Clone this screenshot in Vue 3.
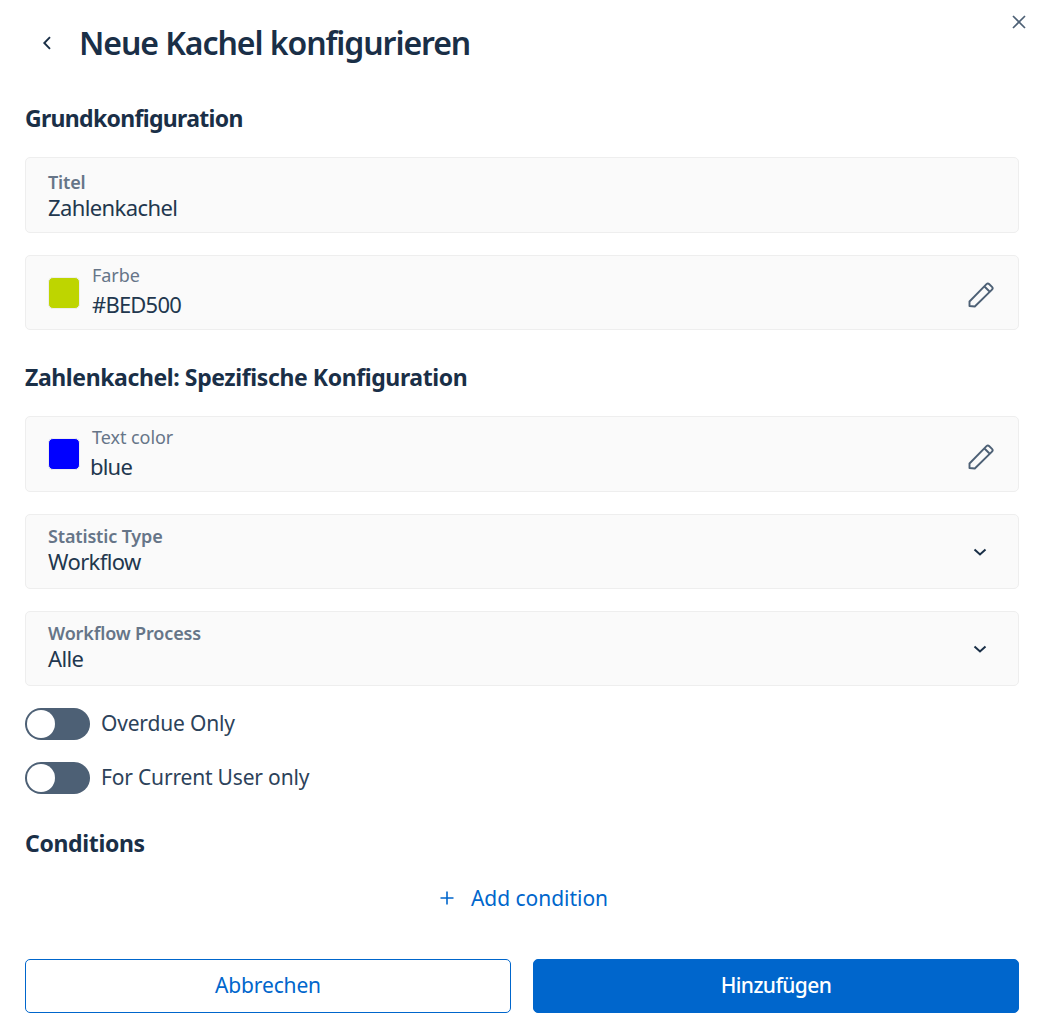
<template>
  <div class="dialog">
    <button class="close" aria-label="Schließen">
      <svg width="16" height="16" viewBox="0 0 16 16"><path d="M2 2l12 12M14 2L2 14" /></svg>
    </button>

    <header class="header">
      <svg class="back" width="12" height="14" viewBox="0 0 12 14"><path d="M9 1.2L3.3 7l5.7 5.8" /></svg>
      <h1>Neue Kachel konfigurieren</h1>
    </header>

    <h2 class="section section--first">Grundkonfiguration</h2>
    <div class="field field--title">
      <label>Titel</label>
      <div class="value">Zahlenkachel</div>
    </div>
    <div class="field field--color field--short">
      <span class="swatch" style="background: #bed500"></span>
      <div class="color-text">
        <span class="color-label">Farbe</span>
        <span class="color-value">#BED500</span>
      </div>
      <svg class="pencil" width="30" height="30" viewBox="0 0 30 30"><path d="M3.5 27v-4.5L20.5 5.2a2 2 0 0 1 2.8 0l2.7 2.7a2 2 0 0 1 0 2.8L8.8 27.5zM18.5 7.5l5.5 5.5" /></svg>
    </div>

    <h2 class="section">Zahlenkachel: Spezifische Konfiguration</h2>
    <div class="field field--color">
      <span class="swatch" style="background: #0000ff"></span>
      <div class="color-text">
        <span class="color-label">Text color</span>
        <span class="color-value color-value--name">blue</span>
      </div>
      <svg class="pencil" width="30" height="30" viewBox="0 0 30 30"><path d="M3.5 27v-4.5L20.5 5.2a2 2 0 0 1 2.8 0l2.7 2.7a2 2 0 0 1 0 2.8L8.8 27.5zM18.5 7.5l5.5 5.5" /></svg>
    </div>
    <div v-for="item in selects" :key="item.label" class="field field--select field--short">
      <div class="select-text">
        <label>{{ item.label }}</label>
        <div class="value">{{ item.value }}</div>
      </div>
      <svg class="chevron" width="16" height="10" viewBox="0 0 16 10"><path d="M2.5 2.5L8 7.5l5.5-5" /></svg>
    </div>

    <div v-for="toggle in toggles" :key="toggle" class="toggle-row">
      <span class="toggle"><span class="knob"></span></span>
      <span class="toggle-label">{{ toggle }}</span>
    </div>

    <h2 class="section section--conditions">Conditions</h2>
    <button class="add">
      <svg width="16" height="16" viewBox="0 0 16 16"><path d="M8 1.5v13M1.5 8h13" /></svg>
      <span>Add condition</span>
    </button>

    <footer class="actions">
      <button class="btn btn--outline">Abbrechen</button>
      <button class="btn btn--primary">Hinzufügen</button>
    </footer>
  </div>
</template>

<script setup>
const selects = [
  { label: "Statistic Type", value: "Workflow" },
  { label: "Workflow Process", value: "Alle" },
];
const toggles = ["Overdue Only", "For Current User only"];
</script>

<style>
html,
body {
  margin: 0;
  background: #fff;
}
</style>

<style scoped>
.dialog {
  position: relative;
  box-sizing: border-box;
  width: 1041px;
  height: 1027px;
  padding: 0 22px 0 25px;
  font-family: "Noto Sans", "Open Sans", sans-serif;
  color: #1a2f47;
}

.close {
  position: absolute;
  top: 14px;
  right: 14px;
  width: 16px;
  height: 16px;
  padding: 0;
  border: none;
  background: none;
}

.close svg {
  display: block;
  fill: none;
  stroke: #4d6075;
  stroke-width: 1.7;
}

.header {
  display: flex;
  align-items: center;
  height: 86px;
  padding-left: 16px;
}

.back {
  fill: none;
  stroke: #1a2f47;
  stroke-width: 1.9;
  margin-right: 26px;
}

h1 {
  margin: 0;
  font-size: 32px;
  font-weight: 600;
  letter-spacing: -1.07px;
  line-height: 40px;
}

.section {
  margin: 32px 0 24px;
  font-size: 23px;
  font-weight: 700;
  letter-spacing: -0.4px;
  line-height: 30px;
}

.section--first {
  margin-top: 17px;
  letter-spacing: -0.68px;
}

.section--conditions {
  margin-top: 34px;
  margin-bottom: 0;
  letter-spacing: -0.35px;
}

.field {
  box-sizing: border-box;
  height: 76px;
  margin-bottom: 22px;
  padding: 0 22px;
  border: 1px solid #eeeeee;
  border-radius: 5px;
  background: #fafafa;
}

.field--short {
  height: 75px;
}

.field--title {
  padding-top: 13px;
}

.field label {
  display: block;
  font-size: 18px;
  font-weight: 600;
  line-height: 22px;
  color: #667588;
  letter-spacing: -0.15px;
}

.value {
  font-size: 22px;
  line-height: 28px;
  color: #22374e;
  letter-spacing: -0.6px;
}

.field--color {
  display: flex;
  align-items: center;
}

.swatch {
  flex: none;
  box-sizing: border-box;
  width: 32px;
  height: 32px;
  border: 1px solid #eee;
  border-radius: 5px;
}

.color-text {
  display: flex;
  flex-direction: column;
  margin-left: 12px;
}

.color-label {
  font-size: 18px;
  line-height: 22px;
  color: #667588;
  letter-spacing: -0.05px;
}

.color-value {
  margin-top: 4px;
  padding-bottom: 3px;
  font-size: 22px;
  line-height: 28px;
  color: #22374e;
  letter-spacing: -0.8px;
}

.color-value--name {
  margin-left: -2px;
}

.pencil {
  margin-top: 3px;
  margin-left: auto;
  fill: none;
  stroke: #4d6075;
  stroke-width: 1.9;
  stroke-linejoin: round;
}

.field--select {
  display: flex;
  align-items: center;
  justify-content: space-between;
  padding-right: 30px;
}

.select-text {
  padding-bottom: 3px;
}

.chevron {
  fill: none;
  stroke: #1a2f47;
  stroke-width: 2;
}

.toggle-row {
  display: flex;
  align-items: center;
  height: 32px;
  margin-bottom: 22px;
}

.toggle {
  position: relative;
  flex: none;
  width: 65px;
  height: 32px;
  border-radius: 16px;
  background: #4d6075;
}

.knob {
  position: absolute;
  top: 2px;
  left: 2px;
  width: 28px;
  height: 28px;
  border-radius: 50%;
  background: #fff;
}

.toggle-label {
  margin-left: 11px;
  padding-bottom: 2px;
  font-size: 21px;
  color: #2c425a;
  letter-spacing: -0.18px;
}

.add {
  display: flex;
  align-items: center;
  justify-content: center;
  gap: 16px;
  width: 100%;
  height: 34px;
  margin-top: 23px;
  padding: 0 0 0 3px;
  border: none;
  background: none;
  color: #0066cc;
  font: inherit;
  font-size: 21px;
  letter-spacing: -0.03px;
}

.add svg {
  fill: none;
  stroke: #0066cc;
  stroke-width: 1.6;
}

.actions {
  display: flex;
  gap: 22px;
  margin-top: 44px;
}

.btn {
  flex: 1;
  height: 54px;
  padding: 0 0 2px;
  border-radius: 5px;
  font: inherit;
  font-size: 21px;
  letter-spacing: -0.15px;
}

.btn--outline {
  border: 1px solid #0066cc;
  background: #fff;
  color: #0066cc;
}

.btn--primary {
  border: 1px solid #0066cc;
  background: #0066cc;
  color: #fff;
  font-weight: 500;
  letter-spacing: -0.6px;
}
</style>
